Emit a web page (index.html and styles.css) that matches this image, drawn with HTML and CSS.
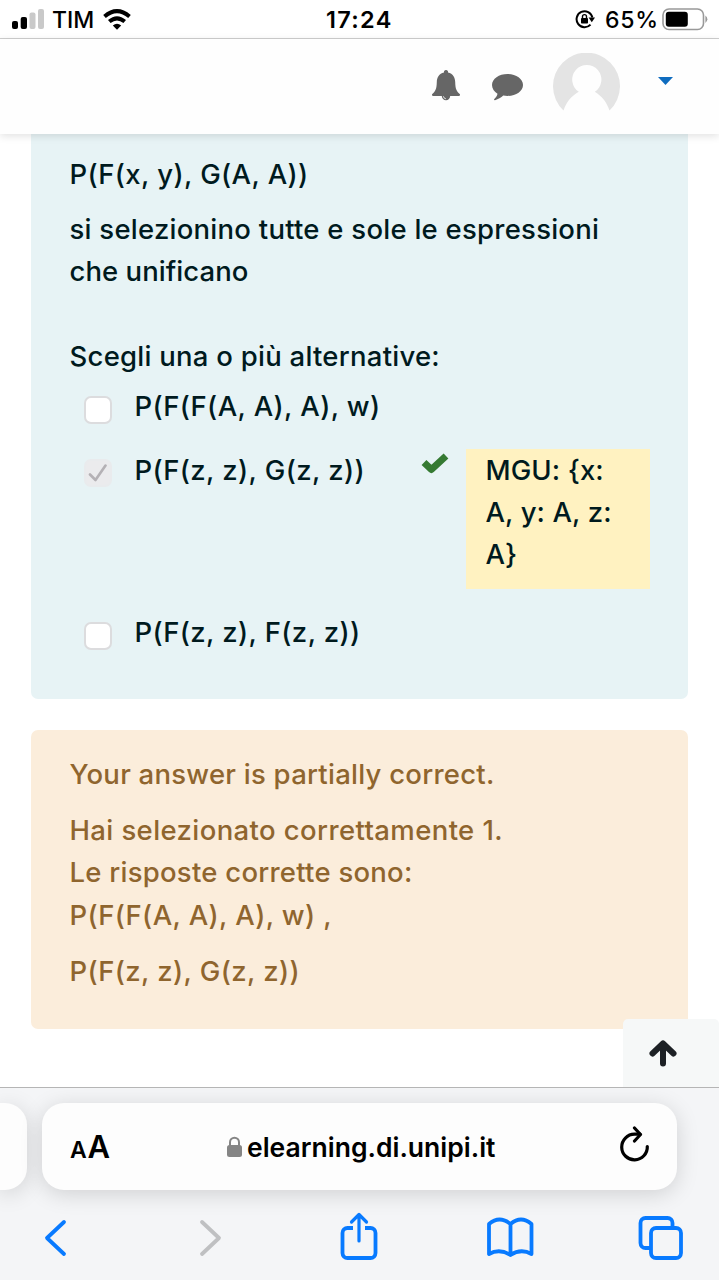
FILE: index.html
```html
<!DOCTYPE html>
<html lang="it">
<head>
<meta charset="utf-8">
<title>elearning.di.unipi.it</title>
<link rel="stylesheet" href="styles.css">
</head>
<body>
<div class="screen">
  <header class="status">
    <svg class="signal" width="34" height="22" viewBox="0 0 34 22"><rect x="2" y="13" width="6" height="8" rx="2"/><rect x="10.700" y="9" width="6.300" height="12" rx="2"/><g fill="#c9c9c9"><rect x="19.500" y="4.500" width="6" height="16.500" rx="2"/><rect x="28" y="1" width="6" height="20" rx="2"/></g></svg>
    <span class="carrier">TIM</span>
    <svg class="wifi" width="28" height="21" viewBox="0 0 28 21"><g fill="none" stroke="#000" stroke-width="4"><path d="M1.500 7.600Q14-3.200 26.500 7.600"/><path d="M6.300 12.600Q14 6 21.700 12.600"/></g><path d="M9.800 16.500Q14 12.800 18.200 16.500L14 20.800Z"/></svg>
    <span class="time">17:24</span>
    <svg class="lockrot" width="20" height="20" viewBox="0 0 20 20"><path d="M15.500 15.600A8 8 0 1 1 17.400 8.500" fill="none" stroke="#000" stroke-width="2"/><path d="M13.600 8.500h6.400l-3.200 4.700z"/><rect x="6" y="9" width="7" height="5.500" rx=".8"/><path d="M7.500 9V7.600a2 2 0 0 1 4 0V9" fill="none" stroke="#000" stroke-width="1.400"/></svg>
    <span class="percent">65%</span>
    <svg class="battery" width="46" height="23" viewBox="0 0 46 23"><rect x="1" y="1" width="40.500" height="20.500" rx="6" fill="none" stroke="#999" stroke-width="1.600"/><rect x="3.800" y="3.800" width="22" height="15" rx="3"/><path d="M43.400 7.600q4 3.700 0 7.400z" fill="#999"/></svg>
  </header>
  <nav class="top">
    <svg class="bell" width="28" height="31" viewBox="0 0 28 31"><path d="M14 0a2 2 0 0 1 2 2.500C21 3.500 23 7.500 23.200 12c.2 7 1.300 9.300 4.500 12 .8.900.3 2-.9 2H1.200c-1.200 0-1.700-1.100-.9-2C3.500 21.300 4.600 19 4.800 12 5 7.500 7 3.500 12 2.500A2 2 0 0 1 14 0Z"/><path d="M9.800 26h8.400a4.200 4.200 0 0 1-8.400 0Z"/><path d="M11.400 26.300q.3 2.300 2.500 2.500" fill="none" stroke="#fff" stroke-width=".8"/></svg>
    <svg class="chat" width="31" height="27" viewBox="0 0 31 27"><path d="M15.500 0C24 0 31 4.800 31 11s-7 11-15.500 11c-1.500 0-2.900-.1-4.200-.4-2.300 2.100-5 3.800-8.300 4.600-.8.200-1.300-.7-.7-1.300 1.800-1.500 2.800-3.100 3.200-5.200C2.200 17.700 0 14.600 0 11 0 4.800 7 0 15.500 0Z"/></svg>
    <svg class="avatar" width="67" height="60" viewBox="0 0 67 60"><path d="M10.500 57.500A33.500 33.500 0 1 1 56.500 57.500C54 50 49 43 41.800 38.800A14.600 14.600 0 1 0 25.800 38.800C18 43 13 50 10.500 57.500Z"/></svg>
    <svg class="caret" width="15" height="8" viewBox="0 0 15 8"><path d="M0 0h15L7.500 8z"/></svg>
  </nav>
  <main>
    <section class="card question">
      <p class="first"><span class="code">P(F(x, y), G(A, A))</span></p>
      <p>si selezionino tutte e sole le espressioni<br><span class="tight">che unificano</span></p>
      <p class="prompt">Scegli una o più alternative:</p>
      <div class="choice"><i class="box"></i><span class="code">P(F(F(A, A), A), w)</span></div>
      <div class="choice second"><i class="box checked"><svg width="20" height="18" viewBox="0 0 20 18"><path d="M2 10.500L7.500 16 17.500 1.500" fill="none" stroke="#b4b1b5" stroke-width="2.600" stroke-linecap="round" stroke-linejoin="round"/></svg></i><span class="code answer">P(F(z, z), G(z, z))</span>
        <svg class="tick" width="28" height="22" viewBox="0 0 28 22"><path d="M3 9.500L10.400 16.500 25 3" fill="none" stroke="#357a32" stroke-width="7" stroke-linejoin="round"/></svg>
        <div class="feedback">MGU: {x:<br>A, y: A, z:<br>A}</div></div>
      <div class="choice third"><i class="box"></i><span class="code">P(F(z, z), F(z, z))</span></div>
    </section>
    <section class="card outcome">
      <p>Your answer is partially correct.</p>
      <p><span class="code">Hai selezionato correttamente 1.</span><br>Le risposte corrette sono:<br><span class="code">P(F(F(A, A), A), w) ,</span></p>
      <p><span class="code">P(F(z, z), G(z, z))</span></p>
    </section>
    <div class="totop"><svg width="28" height="27" viewBox="0 0 28 27"><path d="M3.500 13.500L14 3.500l10.500 10M14 5v18.500" fill="none" stroke="#1d2125" stroke-width="6" stroke-linecap="round" stroke-linejoin="round"/></svg></div>
  </main>
  <footer>
    <div class="tabs">
      <div class="prev"></div>
      <div class="address">
        <span class="aa"><small>A</small>A</span>
        <svg class="lock" width="15" height="21" viewBox="0 0 15 21"><rect y="9" width="15" height="12" rx="2.500" fill="#858585"/><path d="M3 10V6.200a4.500 4.500 0 0 1 9 0V10" fill="none" stroke="#858585" stroke-width="2"/></svg>
        <span class="url">elearning.di.unipi.it</span>
        <svg class="reload" width="30" height="36" viewBox="0 0 30 36"><g fill="none" stroke="#000" stroke-width="3.200" stroke-linecap="round" stroke-linejoin="round"><path d="M27.300 20.500A12.800 12.800 0 1 1 14.500 8.200H20"/><path d="M14.500 2l6 6.500-6 6.500"/></g></svg>
      </div>
    </div>
    <svg class="tools" width="719" height="80" viewBox="0 1200 719 80"><g fill="none" stroke="#087aff" stroke-width="3.800" stroke-linecap="round" stroke-linejoin="round"><path d="M64 1222l-17 16 17 16"/><path d="M202 1222l17 16-17 16" stroke="#bfc0c2"/><path d="M353 1228h-5.500a5 5 0 0 0-5 5v20a5 5 0 0 0 5 5h23a5 5 0 0 0 5-5v-20a5 5 0 0 0-5-5H365" stroke-linecap="butt"/><path d="M359 1241v-25M351.500 1222l7.500-7.500 7.500 7.500" stroke-width="3.200"/><path d="M489 1254v-30q10.500-9 21.500 0 10.500-9 21 0v30q-10.500-6-21 1-11-7-21.500-1zM510.500 1224v31"/><path d="M650 1248h-4.500a5 5 0 0 1-5-5v-20a5 5 0 0 1 5-5h22a5 5 0 0 1 5 5v5" stroke-linecap="butt"/><rect x="651" y="1228" width="30" height="30" rx="5"/></g></svg>
  </footer>
</div>
</body>
</html>
```
FILE: styles.css
```css
* { box-sizing: border-box; }
body { margin: 0; background: #fff; font-family: Inter, "Liberation Sans", sans-serif; }
svg { display: block; flex: none; }
.screen { width: 719px; height: 1280px; display: flex; flex-direction: column; overflow: hidden; }
.status { height: 39px; flex: none; border-bottom: 1px solid #cfcfcf; display: flex; align-items: flex-start; font-size: 23px; line-height: 40px; color: #000; white-space: nowrap; }
.signal { margin: 8px 0 0 10px; }
.carrier { width: 50px; margin-left: 8px; font-weight: 500; }
.wifi { margin: 9px 0 0 1px; }
.time { width: 66px; margin-left: 195px; font-weight: 600; font-size: 23.500px; letter-spacing: 1.300px; }
.lockrot { margin: 9px 0 0 183px; }
.percent { width: 54px; margin-left: 10px; font-weight: 500; letter-spacing: .8px; }
.battery { margin: 8px 0 0 3px; }
.top { position: relative; z-index: 1; height: 95px; flex: none; display: flex; align-items: flex-start; background: #fefefe; box-shadow: 0 2px 8px rgba(0, 0, 0, .12); }
.bell, .chat { fill: #666; }
.bell { margin: 31px 0 0 432px; }
.chat { margin: 35px 0 0 32px; }
.avatar { margin: 14px 0 0 30px; fill: #e4e4e4; }
.caret { margin: 38px 0 0 38px; fill: #0f6cbf; }
main { position: relative; height: 953px; flex: none; padding: 0 31px; }
.card { padding: 19px 38px 0 38.500px; font-size: 27.500px; font-weight: 500; line-height: 42.200px; letter-spacing: .25px; white-space: nowrap; }
.card p { margin: 0 0 14px; }
.card .first { margin-bottom: 13px; }
.code { letter-spacing: .39px; }
.tight { letter-spacing: .05px; }
.question { height: 565px; background: #e7f3f5; color: #001a1e; border-radius: 0 0 7px 7px; }
.question .prompt { margin: 42px 0 8px; }
.choice { display: flex; align-items: flex-start; height: 42px; margin-bottom: 22px; }
.box { width: 28px; height: 28px; flex: none; margin: 11px 23px 0 14px; border: 2.500px solid #dcdcde; border-radius: 7px; background: #fff; }
.box.checked { border-color: #e9ebed; background: #ebebed; padding: 3px 2px; margin-top: 10px; }
.second { height: 140px; }
.answer { width: 230px; }
.tick { margin: 4px 0 0 56px; }
.feedback { width: 186px; height: 140px; margin-left: 17px; padding-left: 20px; background: #fff2c1; letter-spacing: .1px; }
.outcome { height: 299px; margin-top: 31px; padding-top: 23px; background: #fbeddb; color: #8f652e; border-radius: 7px; }
.totop { position: absolute; right: 0; bottom: 0; width: 96px; height: 68px; padding: 21px 0 0 26px; background: #f6f8f8; border-radius: 5px 5px 0 0; }
footer { position: relative; z-index: 1; height: 193px; flex: none; border-top: 1px solid #b5b5b5; background: #f4f5f7; overflow: hidden; }
.tabs { height: 112px; display: flex; gap: 15px; padding-top: 15px; }
.prev, .address { height: 87px; background: #fdfdfd; box-shadow: 0 4px 22px rgba(0, 0, 0, .15); }
.prev { width: 27px; border-radius: 0 22px 22px 0; }
.address { width: 635px; border-radius: 22px; display: flex; align-items: center; color: #000; white-space: nowrap; }
.aa { width: 42px; margin: 4px 0 0 28px; font-size: 31px; font-weight: 600; line-height: 40px; letter-spacing: .8px; }
.aa small { font-size: 23px; }
.lock { margin-left: 115px; }
.url { width: 250px; margin: 0 0 0 5px; font-size: 26.500px; font-weight: 600; line-height: 40px; }
.reload { margin: -6px 0 0 123px; }
```
